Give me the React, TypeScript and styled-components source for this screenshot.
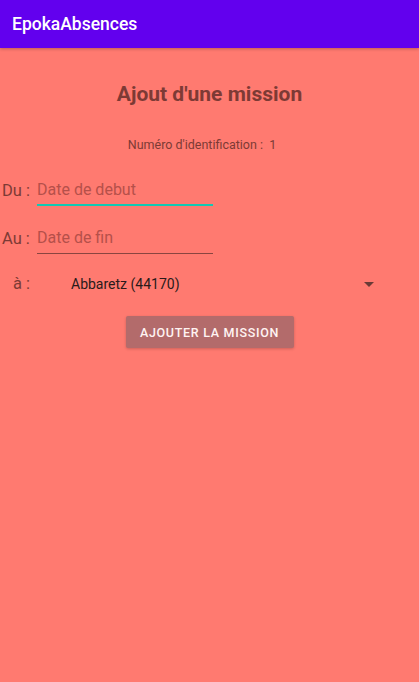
import React from "react";
import styled, { createGlobalStyle } from "styled-components";

const Global = createGlobalStyle`
  html, body { margin: 0; padding: 0; height: 100%; }
  body { background: #ff7a70; font-family: Roboto, "Noto Sans", sans-serif; }
  #root { min-height: 682px; }
`;

const Page = styled.div`
  width: 419px;
  min-height: 682px;
  background: #ff7a70;
  display: flex;
  flex-direction: column;
`;

const AppBar = styled.header`
  height: 48px;
  background: #6200ee;
  display: flex;
  align-items: center;
  padding-left: 12px;
  color: #ffffff;
  font-size: 17.5px;
  font-weight: 500;
  box-shadow: 0 1px 3px rgba(0,0,0,0.25);
`;

const Content = styled.main`
  display: flex;
  flex-direction: column;
`;

const Title = styled.h1`
  margin: 31px 0 0;
  text-align: center;
  font-size: 21px;
  font-weight: 700;
  line-height: 30px;
  color: #7d3a35;
`;

const IdLine = styled.div`
  margin-top: 28px;
  padding-right: 15px;
  text-align: center;
  font-size: 12.5px;
  line-height: 16px;
  color: #7d3a35;
`;

const FieldRow = styled.div<{ $top: number }>`
  margin-top: ${(p) => p.$top}px;
  display: flex;
  align-items: flex-end;
  height: 30px;
`;

const Label = styled.span<{ $width: number; $pad?: number }>`
  width: ${(p) => p.$width}px;
  padding-left: ${(p) => p.$pad ?? 2}px;
  box-sizing: border-box;
  font-size: 16.5px;
  color: #7d3a35;
  line-height: 30px;
`;

const Input = styled.div<{ $focused?: boolean }>`
  width: 176px;
  height: 30px;
  box-sizing: border-box;
  border-bottom: ${(p) => (p.$focused ? "2px solid #12c9b4" : "1px solid #8a4540")};
  font-size: 16px;
  line-height: 27px;
  color: #b5504a;
`;

const SpinnerRow = styled.div`
  margin-top: 15px;
  display: flex;
  align-items: center;
  height: 30px;
`;

const Spinner = styled.div`
  display: flex;
  align-items: center;
  width: 303px;
  margin-left: 23px;
  justify-content: space-between;
  font-size: 14px;
  color: #2a1a1a;
`;

const Arrow = styled.span`
  width: 0;
  height: 0;
  border-left: 5px solid transparent;
  border-right: 5px solid transparent;
  border-top: 5px solid #6a3a36;
`;

const Button = styled.button`
  align-self: center;
  margin-top: 17px;
  width: 168px;
  height: 32px;
  border: none;
  border-radius: 2px;
  background: #b36b6b;
  color: #fff3f2;
  font-family: Roboto, "Noto Sans", sans-serif;
  font-size: 12.5px;
  font-weight: 500;
  letter-spacing: 0.7px;
  box-shadow: 0 1px 3px rgba(0,0,0,0.2);
`;

export default function App() {
  return (
    <Page>
      <Global />
      <AppBar>EpokaAbsences</AppBar>
      <Content>
        <Title>Ajout d'une mission</Title>
        <IdLine>Numéro d'identification :&nbsp;&nbsp;1</IdLine>
        <FieldRow $top={23}>
          <Label $width={37}>Du :</Label>
          <Input $focused>Date de debut</Input>
        </FieldRow>
        <FieldRow $top={18}>
          <Label $width={37}>Au :</Label>
          <Input>Date de fin</Input>
        </FieldRow>
        <SpinnerRow>
          <Label $width={48} $pad={13}>à :</Label>
          <Spinner>
            <span>Abbaretz (44170)</span>
            <Arrow />
          </Spinner>
        </SpinnerRow>
        <Button>AJOUTER LA MISSION</Button>
      </Content>
    </Page>
  );
}
